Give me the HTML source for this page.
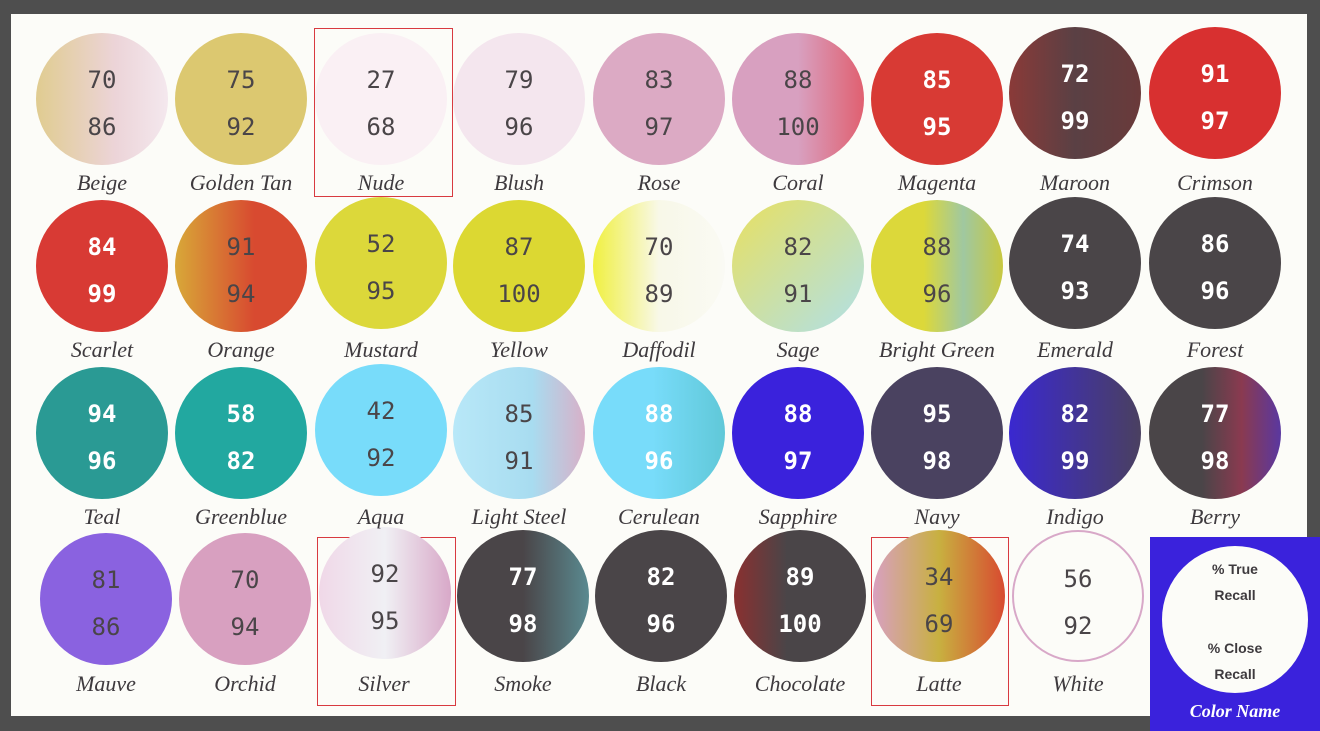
<!DOCTYPE html>
<html><head><meta charset="utf-8"><style>
body{margin:0;width:1320px;height:731px;background:#4e4e4e;position:relative;overflow:hidden}
.panel{position:absolute;left:11px;top:14px;width:1296px;height:702px;background:#fcfcf8}
.c{position:absolute;width:132px;height:132px;border-radius:50%;box-sizing:border-box;font-family:"DejaVu Sans Mono","Liberation Mono",monospace;font-size:24px;color:#4a4548;text-align:center}
.c .a{position:absolute;left:0;right:0;top:33px}
.c .b{position:absolute;left:0;right:0;top:80px}
.w{color:#fff;font-weight:bold}
.l{position:absolute;width:140px;text-align:center;font-family:"Liberation Serif",serif;font-style:italic;font-size:22px;color:#3e3a3e}
.box{position:absolute;border:1.5px solid #d83a40;box-sizing:border-box}
.leg{position:absolute;left:1150px;top:537px;width:170px;height:194px;background:#3a22dc}
.lc{position:absolute;left:12px;top:9px;width:146px;height:147px;border-radius:50%;background:#fcfcf8;font-family:"Liberation Sans",sans-serif;font-weight:bold;font-size:14px;color:#3e3a3e;text-align:center;line-height:26px}
</style></head><body>
<div class="panel"></div>
<div class="box" style="left:314px;top:28px;width:139px;height:169px"></div>
<div class="box" style="left:317px;top:537px;width:139px;height:169px"></div>
<div class="box" style="left:871px;top:537px;width:138px;height:169px"></div>

<!-- Row 1 -->
<div class="c" style="left:36px;top:33px;background:linear-gradient(90deg,#e0cc90,#ecd4d8 60%,#f4e8ee)"><div class="a">70</div><div class="b">86</div></div>
<div class="c" style="left:175px;top:33px;background:#dcc870"><div class="a">75</div><div class="b">92</div></div>
<div class="c" style="left:315px;top:33px;background:#faf0f4"><div class="a">27</div><div class="b">68</div></div>
<div class="c" style="left:453px;top:33px;background:#f4e6ee"><div class="a">79</div><div class="b">96</div></div>
<div class="c" style="left:593px;top:33px;background:#dcaac4"><div class="a">83</div><div class="b">97</div></div>
<div class="c" style="left:732px;top:33px;background:linear-gradient(90deg,#d8a0c0 50%,#e06070)"><div class="a">88</div><div class="b">100</div></div>
<div class="c w" style="left:871px;top:33px;background:#d83a34"><div class="a">85</div><div class="b">95</div></div>
<div class="c w" style="left:1009px;top:27px;background:linear-gradient(90deg,#8a3a38,#5a4044 50%,#6a3a3a)"><div class="a">72</div><div class="b">99</div></div>
<div class="c w" style="left:1149px;top:27px;background:#d83030"><div class="a">91</div><div class="b">97</div></div>

<!-- Row 2 -->
<div class="c w" style="left:36px;top:200px;background:#d83a34"><div class="a">84</div><div class="b">99</div></div>
<div class="c" style="left:175px;top:200px;background:linear-gradient(90deg,#d8a838,#d84a30 60%)"><div class="a">91</div><div class="b">94</div></div>
<div class="c" style="left:315px;top:197px;background:#dcd83a"><div class="a">52</div><div class="b">95</div></div>
<div class="c" style="left:453px;top:200px;background:#dcd832"><div class="a">87</div><div class="b">100</div></div>
<div class="c" style="left:593px;top:200px;background:linear-gradient(90deg,#f0f040,#f8f8e8 50%,#fafaf4)"><div class="a">70</div><div class="b">89</div></div>
<div class="c" style="left:732px;top:200px;background:linear-gradient(135deg,#e8e060,#b0e0e8)"><div class="a">82</div><div class="b">91</div></div>
<div class="c" style="left:871px;top:200px;background:linear-gradient(90deg,#dcd83a 40%,#a0c8a0 70%,#c8c840)"><div class="a">88</div><div class="b">96</div></div>
<div class="c w" style="left:1009px;top:197px;background:#4a4548"><div class="a">74</div><div class="b">93</div></div>
<div class="c w" style="left:1149px;top:197px;background:#4a4548"><div class="a">86</div><div class="b">96</div></div>

<!-- Row 3 -->
<div class="c w" style="left:36px;top:367px;background:#2a9a94"><div class="a">94</div><div class="b">96</div></div>
<div class="c w" style="left:175px;top:367px;background:#22a8a0"><div class="a">58</div><div class="b">82</div></div>
<div class="c" style="left:315px;top:364px;background:#78dcfa"><div class="a">42</div><div class="b">92</div></div>
<div class="c" style="left:453px;top:367px;background:linear-gradient(90deg,#b8e8f8,#a8dcf0 60%,#d8b0c8)"><div class="a">85</div><div class="b">91</div></div>
<div class="c w" style="left:593px;top:367px;background:linear-gradient(90deg,#78dcfa 45%,#60c8d8)"><div class="a">88</div><div class="b">96</div></div>
<div class="c w" style="left:732px;top:367px;background:#3a22dc"><div class="a">88</div><div class="b">97</div></div>
<div class="c w" style="left:871px;top:367px;background:#4a4260"><div class="a">95</div><div class="b">98</div></div>
<div class="c w" style="left:1009px;top:367px;background:linear-gradient(90deg,#3a28d0,#4a4060)"><div class="a">82</div><div class="b">99</div></div>
<div class="c w" style="left:1149px;top:367px;background:linear-gradient(90deg,#4a4548 40%,#8a3a50 70%,#5a38a0)"><div class="a">77</div><div class="b">98</div></div>

<!-- Row 4 -->
<div class="c" style="left:40px;top:533px;background:#8a62e0"><div class="a">81</div><div class="b">86</div></div>
<div class="c" style="left:179px;top:533px;background:#d8a0c0"><div class="a">70</div><div class="b">94</div></div>
<div class="c" style="left:319px;top:527px;background:linear-gradient(90deg,#f0d8e8,#f0f0f4 50%,#d8a8c8)"><div class="a">92</div><div class="b">95</div></div>
<div class="c w" style="left:457px;top:530px;background:linear-gradient(90deg,#4a4548 50%,#5a8a90)"><div class="a">77</div><div class="b">98</div></div>
<div class="c w" style="left:595px;top:530px;background:#4a4548"><div class="a">82</div><div class="b">96</div></div>
<div class="c w" style="left:734px;top:530px;background:linear-gradient(90deg,#8a3030,#4a4548 40%)"><div class="a">89</div><div class="b">100</div></div>
<div class="c" style="left:873px;top:530px;background:linear-gradient(90deg,#d8a0c0,#c8b040 50%,#d84a30)"><div class="a">34</div><div class="b">69</div></div>
<div class="c" style="left:1012px;top:530px;background:#fcfcf8;border:2px solid #d8a8c8"><div class="a">56</div><div class="b">92</div></div>

<!-- Labels -->
<div class="l" style="left:32px;top:170px">Beige</div>
<div class="l" style="left:171px;top:170px">Golden Tan</div>
<div class="l" style="left:311px;top:170px">Nude</div>
<div class="l" style="left:449px;top:170px">Blush</div>
<div class="l" style="left:589px;top:170px">Rose</div>
<div class="l" style="left:728px;top:170px">Coral</div>
<div class="l" style="left:867px;top:170px">Magenta</div>
<div class="l" style="left:1005px;top:170px">Maroon</div>
<div class="l" style="left:1145px;top:170px">Crimson</div>

<div class="l" style="left:32px;top:337px">Scarlet</div>
<div class="l" style="left:171px;top:337px">Orange</div>
<div class="l" style="left:311px;top:337px">Mustard</div>
<div class="l" style="left:449px;top:337px">Yellow</div>
<div class="l" style="left:589px;top:337px">Daffodil</div>
<div class="l" style="left:728px;top:337px">Sage</div>
<div class="l" style="left:867px;top:337px">Bright Green</div>
<div class="l" style="left:1005px;top:337px">Emerald</div>
<div class="l" style="left:1145px;top:337px">Forest</div>

<div class="l" style="left:32px;top:504px">Teal</div>
<div class="l" style="left:171px;top:504px">Greenblue</div>
<div class="l" style="left:311px;top:504px">Aqua</div>
<div class="l" style="left:449px;top:504px">Light Steel</div>
<div class="l" style="left:589px;top:504px">Cerulean</div>
<div class="l" style="left:728px;top:504px">Sapphire</div>
<div class="l" style="left:867px;top:504px">Navy</div>
<div class="l" style="left:1005px;top:504px">Indigo</div>
<div class="l" style="left:1145px;top:504px">Berry</div>

<div class="l" style="left:36px;top:671px">Mauve</div>
<div class="l" style="left:175px;top:671px">Orchid</div>
<div class="l" style="left:314px;top:671px">Silver</div>
<div class="l" style="left:453px;top:671px">Smoke</div>
<div class="l" style="left:591px;top:671px">Black</div>
<div class="l" style="left:730px;top:671px">Chocolate</div>
<div class="l" style="left:869px;top:671px">Latte</div>
<div class="l" style="left:1008px;top:671px">White</div>

<div class="leg">
<div class="lc"><div style="padding-top:10px">% True<br>Recall</div><div style="padding-top:27px">% Close<br>Recall</div></div>
<div style="position:absolute;left:0;right:0;top:164px;text-align:center;color:#fff;font-family:'Liberation Serif',serif;font-style:italic;font-weight:bold;font-size:18px">Color Name</div>
</div>
</body></html>
